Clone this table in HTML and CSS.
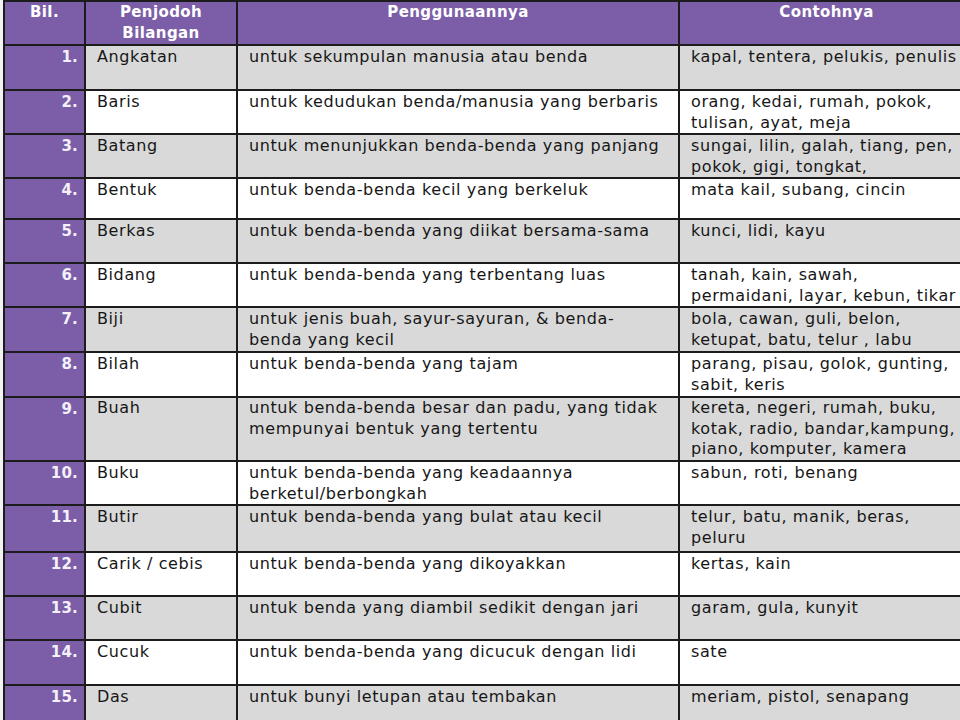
FILE: index.html
```html
<!DOCTYPE html>
<html lang="ms">
<head>
<meta charset="utf-8">
<title>Penjodoh Bilangan</title>
<link rel="stylesheet" href="styles.css">
</head>
<body>
<table class="pb">
  <colgroup>
    <col class="c-bil"><col class="c-pen"><col class="c-gun"><col class="c-con">
  </colgroup>
  <thead>
    <tr class="head">
      <th>Bil.</th>
      <th>Penjodoh<br>Bilangan</th>
      <th>Penggunaannya</th>
      <th>Contohnya</th>
    </tr>
  </thead>
  <tbody>
    <tr class="odd h45"><td class="num">1.</td><td>Angkatan</td><td>untuk sekumpulan manusia atau benda</td><td>kapal, tentera, pelukis, penulis</td></tr>
    <tr class="even"><td class="num">2.</td><td>Baris</td><td>untuk kedudukan benda/manusia yang berbaris</td><td>orang, kedai, rumah, pokok,<br>tulisan, ayat, meja</td></tr>
    <tr class="odd"><td class="num">3.</td><td>Batang</td><td>untuk menunjukkan benda-benda yang panjang</td><td>sungai, lilin, galah, tiang, pen,<br>pokok, gigi, tongkat,</td></tr>
    <tr class="even h41"><td class="num">4.</td><td>Bentuk</td><td>untuk benda-benda kecil yang berkeluk</td><td>mata kail, subang, cincin</td></tr>
    <tr class="odd"><td class="num">5.</td><td>Berkas</td><td>untuk benda-benda yang diikat bersama-sama</td><td>kunci, lidi, kayu</td></tr>
    <tr class="even"><td class="num">6.</td><td>Bidang</td><td>untuk benda-benda yang terbentang luas</td><td>tanah, kain, sawah,<br>permaidani, layar, kebun, tikar</td></tr>
    <tr class="odd h45"><td class="num">7.</td><td>Biji</td><td>untuk jenis buah, sayur-sayuran, &amp; benda-<br>benda yang kecil</td><td>bola, cawan, guli, belon,<br>ketupat, batu, telur , labu</td></tr>
    <tr class="even h45"><td class="num">8.</td><td>Bilah</td><td>untuk benda-benda yang tajam</td><td>parang, pisau, golok, gunting,<br>sabit, keris</td></tr>
    <tr class="odd three"><td class="num">9.</td><td>Buah</td><td>untuk benda-benda besar dan padu, yang tidak<br>mempunyai bentuk yang tertentu</td><td>kereta, negeri, rumah, buku,<br>kotak, radio, bandar,kampung,<br>piano, komputer, kamera</td></tr>
    <tr class="even"><td class="num">10.</td><td>Buku</td><td>untuk benda-benda yang keadaannya<br>berketul/berbongkah</td><td>sabun, roti, benang</td></tr>
    <tr class="odd h47"><td class="num">11.</td><td>Butir</td><td>untuk benda-benda yang bulat atau kecil</td><td>telur, batu, manik, beras,<br>peluru</td></tr>
    <tr class="even"><td class="num">12.</td><td>Carik / cebis</td><td>untuk benda-benda yang dikoyakkan</td><td>kertas, kain</td></tr>
    <tr class="odd"><td class="num">13.</td><td>Cubit</td><td>untuk benda yang diambil sedikit dengan jari</td><td>garam, gula, kunyit</td></tr>
    <tr class="even h45"><td class="num">14.</td><td>Cucuk</td><td>untuk benda-benda yang dicucuk dengan lidi</td><td>sate</td></tr>
    <tr class="odd"><td class="num">15.</td><td>Das</td><td>untuk bunyi letupan atau tembakan</td><td>meriam, pistol, senapang</td></tr>
  </tbody>
</table>
</body>
</html>
```

FILE: styles.css
```css
html, body {
  margin: 0;
  padding: 0;
}
body {
  width: 960px;
  height: 720px;
  overflow: hidden;
  background: #f2f2f2;
  padding-left: 3px;
  box-sizing: border-box;
  font-family: "DejaVu Sans", "Liberation Sans", sans-serif;
  color: #161616;
}
.pb {
  border-collapse: collapse;
  table-layout: fixed;
  width: 970px;
  font-size: 16px;
  letter-spacing: 0.6px;
}
.c-bil { width: 81px; }
.c-pen { width: 152px; }
.c-gun { width: 442px; }
.c-con { width: 295px; }

.pb th, .pb td {
  border: 2px solid #1c1c1c;
  vertical-align: top;
  line-height: 21px;
  white-space: nowrap;
  overflow: hidden;
}
.pb th {
  background: #7b5ea7;
  color: #fff;
  font-weight: bold;
  text-align: center;
  padding: 0 4px;
  height: 42px;
  font-size: 15px;
  letter-spacing: 0.4px;
}
.pb td {
  padding: 0 4px 0 11px;
}
.pb tr { height: 44px; }
.pb tr.h41 { height: 41px; }
.pb tr.h45 { height: 45px; }
.pb tr.h47 { height: 47px; }
.pb tr.three td {
  line-height: 20.5px;
}
.odd td { background: #d9d9d9; }
.even td { background: #ffffff; }
.pb td.num {
  background: #7b5ea7;
  color: #f4f0fa;
  font-weight: bold;
  font-size: 15px;
  letter-spacing: 0.2px;
  text-align: right;
  padding: 1px 6px 0 4px;
}
```
